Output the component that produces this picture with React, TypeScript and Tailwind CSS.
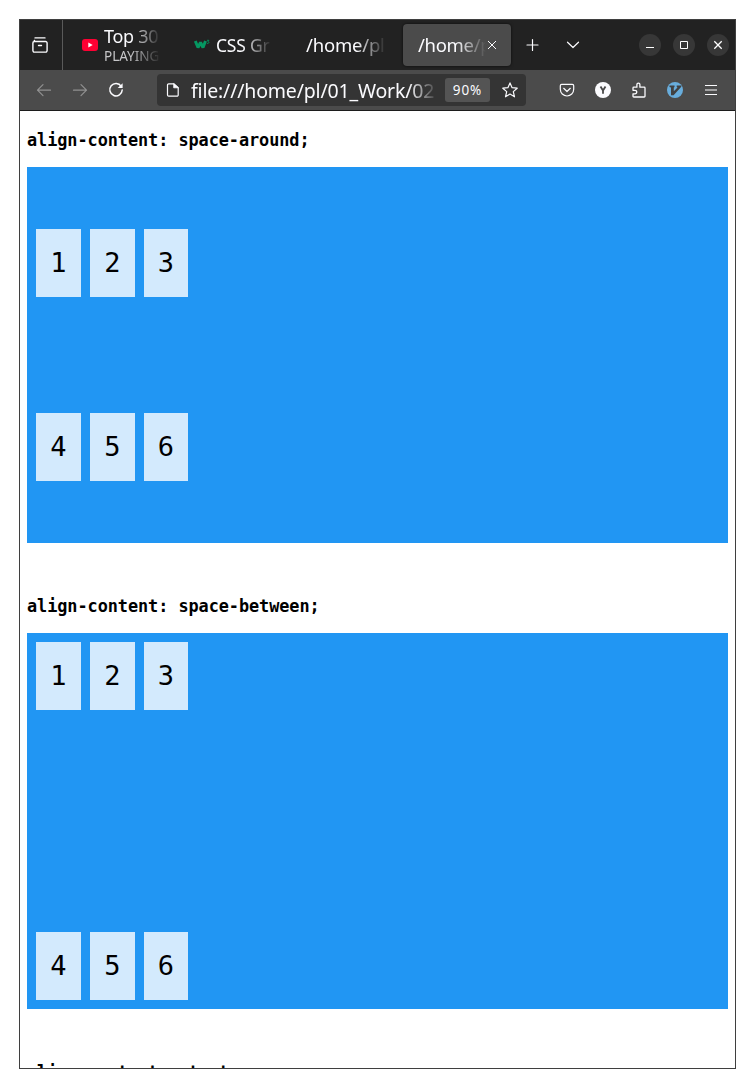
import type { ReactNode } from 'react';

function Icon({ className = '', width = 1.2, children }: { className?: string; width?: number; children: ReactNode }) {
  return (
    <svg viewBox="0 0 16 16" fill="none" stroke="currentColor" strokeWidth={width} strokeLinecap="round" strokeLinejoin="round" className={`block size-4 shrink-0 ${className}`}>
      {children}
    </svg>
  );
}

const fade = 'overflow-hidden whitespace-nowrap [mask-image:linear-gradient(to_right,black_calc(100%-30px),transparent)]';

function WindowButton({ children }: { children: ReactNode }) {
  return <div className="flex size-[22px] items-center justify-center rounded-full bg-[#373737] text-white">{children}</div>;
}

function TabBar() {
  return (
    <div className="flex h-[50px] shrink-0 items-center bg-[#222222] text-[#fbfbfe]">
      <div className="flex h-full w-[43px] items-center border-r border-[#5a5a5a] pl-3">
        <Icon width={1.4}>
          <path d="M3 .9h10" />
          <path d="M2.500 3.400Q2 4.500 2.400 4.500h11.200A1.500 1.500 0 0 1 15.100 6v7.600a1.500 1.500 0 0 1-1.500 1.500H2.400A1.500 1.500 0 0 1 .9 13.600V6a1.500 1.500 0 0 1 1.500-1.500" />
          <path d="M6.500 8.500h3" />
        </Icon>
      </div>
      <div className="flex w-[131px] items-center pl-[19px]">
        <svg viewBox="0 0 16 12" className="block h-3 w-4 shrink-0">
          <rect width="16" height="12" rx="3" fill="#ff0033" />
          <path d="M6.300 3.500 10.700 6 6.300 8.500z" fill="#fff" />
        </svg>
        <div className={`ml-[6px] w-[57px] ${fade}`}>
          <div className="h-[22px] text-[18px] leading-[22px] tracking-[-0.3px]">Top 30</div>
          <div className="h-[18px] text-[13.5px] leading-[19px] tracking-[0px] text-[#c6c6c8]">PLAYING</div>
        </div>
      </div>
      <div className="flex w-[112px] items-center">
        <svg viewBox="0 0 16 12" className="block h-3 w-4 shrink-0" fill="none" stroke="#059862">
          <path d="M1.300 2 4 8.500 6.500 3.500 9 8.500 11.500 2" strokeWidth="3" strokeLinejoin="bevel" />
          <path d="M13 1.300h1.900l-1 1.400c1.600 0 1.200 2.200-1 1.700" strokeWidth=".9" />
        </svg>
        <div className={`ml-[6px] w-[56px] text-[17.5px] leading-6 tracking-[-0.2px] ${fade}`}>CSS Gr</div>
      </div>
      <div className={`w-[80px] text-[18.5px] leading-6 tracking-[-0.2px] ${fade}`}>/home/pl</div>
      <div className="ml-[17px] flex h-[42px] w-[108px] items-center rounded bg-[#4b4b4b] pl-[15px] shadow-[0_0_3px_rgba(0,0,0,0.7)]">
        <div className={`w-[68px] text-[18.5px] leading-6 tracking-[-0.3px] ${fade}`}>/home/p</div>
        <svg viewBox="0 0 12 12" className="block size-3 shrink-0" stroke="currentColor" strokeWidth="1"><path d="m2 2 8 8M10 2 2 10" /></svg>
      </div>
      <Icon className="ml-[14px]"><path d="M7.500 2.500v11M2 8h11" /></Icon>
      <Icon className="ml-6"><path d="m2.500 5.200 5.500 5.300 5.500-5.300" /></Icon>
      <div className="ml-auto mr-[6px] flex gap-3">
        <WindowButton><svg viewBox="0 0 10 10" className="size-[10px]" stroke="currentColor"><path d="M1 7.500h8" /></svg></WindowButton>
        <WindowButton><svg viewBox="0 0 10 10" className="size-[10px]" fill="none" stroke="currentColor"><path d="M1.500 1.500h7v7h-7z" /></svg></WindowButton>
        <WindowButton><svg viewBox="0 0 10 10" className="size-[10px]" stroke="currentColor" strokeWidth="1.300"><path d="m1.300 1.300 7.400 7.400M8.700 1.300 1.300 8.700" /></svg></WindowButton>
      </div>
    </div>
  );
}

function Toolbar() {
  return (
    <div className="flex h-[41px] shrink-0 items-center border-b border-[#1c1c1c] bg-[#4b4b4b] pl-4 text-[#fbfbfe]">
      <div className="flex gap-5">
        <Icon className="text-[#919191]"><path d="M14.500 8.200H1.500M7 2.700 1.500 8.200 7 13.700" /></Icon>
        <Icon className="text-[#919191]"><path d="M1.500 8.200h13M9 2.700l5.500 5.500L9 13.700" /></Icon>
        <Icon width={1.500}>
          <path d="M13.200 4.300A6.200 6.200 0 1 0 14.200 8" />
          <path d="M14.600 1.200v4.900H9.700z" fill="currentColor" stroke="none" />
        </Icon>
      </div>
      <div className="ml-[33px] flex h-8 w-[369px] items-center rounded bg-[#343434] pl-2">
        <Icon><path d="M2.500 3a1.200 1.200 0 0 1 1.200-1.200h5l4.500 4v7.200a1.200 1.200 0 0 1-1.200 1.200H3.700A1.200 1.200 0 0 1 2.500 13z" /><path d="M8.700 2v3.800H13z" fill="currentColor" strokeWidth=".8" /></Icon>
        <div className={`ml-[10px] mt-px w-[247px] text-[19.5px] leading-7 tracking-[-0.18px] ${fade}`}>file:///home/pl/01_Work/02</div>
        <div className="ml-[7px] flex h-6 w-[45px] items-center justify-center rounded-[3px] bg-[#545454] pt-px text-[13.5px] tracking-[0.9px]">90%</div>
        <Icon className="ml-3"><path d="m8 .9 2.100 4.800 5.100.5-3.900 3.400 1.200 5.200L8 12.100l-4.500 2.700 1.200-5.200L.8 6.200l5.100-.5z" /></Icon>
      </div>
      <div className="ml-[33px] flex gap-5">
        <Icon><path d="M2.700 2.300h10.600a1.400 1.400 0 0 1 1.400 1.400v3.600a6.700 6.700 0 0 1-13.400 0V3.700a1.400 1.400 0 0 1 1.400-1.400z" /><path d="m4.700 6.300 3.300 3.200 3.300-3.200" /></Icon>
        <svg viewBox="0 0 16 16" className="size-4"><circle cx="8" cy="8" r="8" fill="#fbfbfe" /><path d="m5.500 4.500 2.500 4 2.500-4M8 8.500v3.300" stroke="#494949" strokeWidth="1.800" fill="none" /></svg>
        <Icon width={1.3}><path d="M2 7.600V6q0-.8.8-.8h3.100V2.600a1.500 1.500 0 0 1 3 0v2.600h4.300q.8 0 .8.8v8.200q0 .8-.8.8H2.800q-.8 0-.8-.8v-2.400h2a1.700 1.700 0 0 0 0-3.500H2z" /></Icon>
        <svg viewBox="0 0 16 16" className="size-4">
          <circle cx="8" cy="8" r="8" fill="#68addc" />
          <path d="M2.500 3.500h5v1.400l-.7.600v3.800L10.500 5.500l-.8-.5V3.500h4.600v1.300L6.600 13.200H4V5.500L2.500 4.900z" fill="#414141" />
        </svg>
        <Icon><path d="M2 3.500h12M2 8h12M2 12.500h12" strokeLinecap="butt" /></Icon>
      </div>
    </div>
  );
}

function Demo({ title, align }: { title: string; align: string }) {
  return (
    <section className="mb-[53px]">
      <h3 className="mb-[17px] h-5 font-['DejaVu_Sans_Mono',monospace] text-[16.85px] font-bold leading-5 tracking-[-0.05px]">align-content: {title};</h3>
      <div className={`grid h-[376px] grid-cols-[45px_45px_44px] gap-[9px] bg-[#2196f3] p-[9px] ${align}`}>
        {[1, 2, 3, 4, 5, 6].map((n) => (
          <div key={n} className="flex h-[68px] items-center justify-center bg-[#d3eafd] font-['DejaVu_Sans_Mono',monospace] text-[27px] leading-8">{n}</div>
        ))}
      </div>
    </section>
  );
}

export default function App() {
  return (
    <main className="h-[1088px] bg-white px-[19px] pt-[19px] font-['Noto_Sans',sans-serif]">
      <div className="flex h-[1050px] w-[717px] flex-col overflow-hidden border border-[#3f3f3f] bg-white">
        <TabBar />
        <Toolbar />
        <div className="min-h-0 flex-1 overflow-hidden px-[7px] pt-[19px] text-black">
          <Demo title="space-around" align="content-around" />
          <Demo title="space-between" align="content-between" />
          <Demo title="start" align="content-start" />
        </div>
      </div>
    </main>
  );
}
